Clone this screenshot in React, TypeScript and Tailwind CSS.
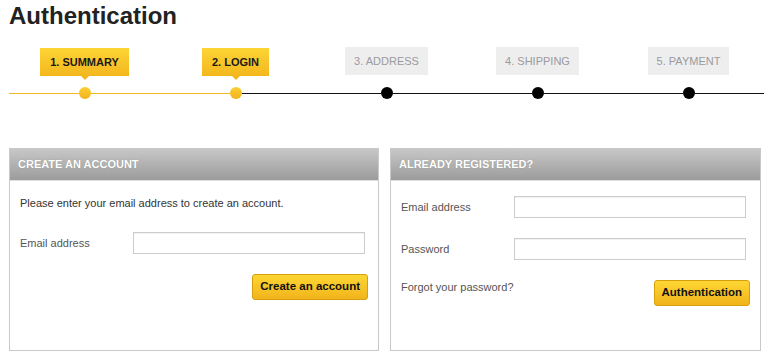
import React from "react";

const steps = [
  { label: "1. SUMMARY", active: true },
  { label: "2. LOGIN", active: true },
  { label: "3. ADDRESS", active: false },
  { label: "4. SHIPPING", active: false },
  { label: "5. PAYMENT", active: false },
];

function Step({ label, active, idx }: { label: string; active: boolean; idx: number }) {
  const leftYellow = idx <= 1;
  const rightYellow = idx === 0;
  return (
    <div className="flex flex-col items-center">
      <div className="h-[28px] flex items-start">
        {active ? (
          <div className="h-[28px] mt-[1px] px-[10px] flex items-center bg-gradient-to-b from-[#fdd535] to-[#f3b71d] text-[11px] font-bold text-[#1a1a1a] leading-none">
            {label}
          </div>
        ) : (
          <div className="h-[28px] px-[9px] flex items-center bg-[#eeeeee] text-[11px] text-[#9a9aa0] leading-none">
            {label}
          </div>
        )}
      </div>
      <div className="h-[5px] mt-[1px] flex justify-center">
        {active && (
          <div className="w-0 h-0 border-l-[4px] border-r-[4px] border-t-[4px] border-l-transparent border-r-transparent border-t-[#f3b71d]" />
        )}
      </div>
      <div className="mt-[6px] w-full h-[12px] flex items-center">
        <div className={`flex-1 h-px ${leftYellow ? "bg-[#f0b92a]" : "bg-[#111111]"}`} />
        {active ? (
          <div className="w-[12px] h-[12px] rounded-full bg-gradient-to-b from-[#fbcf33] to-[#f2b31c]" />
        ) : (
          <div className="w-[12px] h-[12px] rounded-full bg-[#000000]" />
        )}
        <div className={`flex-1 h-px ${rightYellow ? "bg-[#f0b92a]" : "bg-[#111111]"}`} />
      </div>
    </div>
  );
}

function PanelHeader({ title }: { title: string }) {
  return (
    <div className="h-[32px] flex items-center pl-[8px] bg-gradient-to-b from-[#c7c7c7] to-[#9c9c9c] border-b border-[#dedede]">
      <span className="text-[11px] font-bold text-white uppercase [text-shadow:0_0_1px_rgba(0,0,0,0.25)]">
        {title}
      </span>
    </div>
  );
}

function Input() {
  return (
    <div className="w-[232px] h-[22px] border border-[#cccccc] bg-white shadow-[inset_0_1px_1px_rgba(0,0,0,0.06)]" />
  );
}

function YellowButton({ children }: { children: React.ReactNode }) {
  return (
    <div className="h-[26px] px-[7px] flex items-center rounded-[3px] border border-[#d5a00c] bg-gradient-to-b from-[#fdd633] to-[#f1b41b] text-[11.5px] font-bold text-[#111111]">
      {children}
    </div>
  );
}

export default function App() {
  return (
    <div className="w-[776px] h-[357px] bg-white font-['Liberation_Sans',Arial,sans-serif] overflow-hidden">
      <h1 className="pl-[9px] pt-[2px] text-[24px] leading-[28px] font-bold text-[#222222]">Authentication</h1>

      <div className="mt-[17px] ml-[9px] w-[755px] grid grid-cols-5">
        {steps.map((s, i) => (
          <Step key={s.label} label={s.label} active={s.active} idx={i} />
        ))}
      </div>

      <div className="mt-[49px] ml-[9px] w-[752px] grid grid-cols-[370px_371px] gap-[11px]">
        <div className="h-[203px] border border-[#c9c9c9] flex flex-col">
          <PanelHeader title="Create an account" />
          <div className="px-[10px] pt-[14px] flex flex-col">
            <p className="text-[11px] leading-[16px] text-[#333333]">
              Please enter your email address to create an account.
            </p>
            <div className="mt-[21px] flex items-center">
              <span className="w-[113px] text-[11px] text-[#555555]">Email address</span>
              <Input />
            </div>
            <div className="mt-[20px] flex justify-end">
              <YellowButton>Create an account</YellowButton>
            </div>
          </div>
        </div>

        <div className="h-[203px] border border-[#c9c9c9] flex flex-col">
          <PanelHeader title="Already registered?" />
          <div className="px-[10px] pt-[15px] flex flex-col">
            <div className="flex items-center">
              <span className="w-[113px] text-[11px] text-[#555555]">Email address</span>
              <Input />
            </div>
            <div className="mt-[20px] flex items-center">
              <span className="w-[113px] text-[11px] text-[#555555]">Password</span>
              <Input />
            </div>
            <div className="mt-[20px] flex items-start justify-between">
              <span className="-mt-[1px] text-[11px] leading-[16px] text-[#555555]">Forgot your password?</span>
              <YellowButton>Authentication</YellowButton>
            </div>
          </div>
        </div>
      </div>
    </div>
  );
}
